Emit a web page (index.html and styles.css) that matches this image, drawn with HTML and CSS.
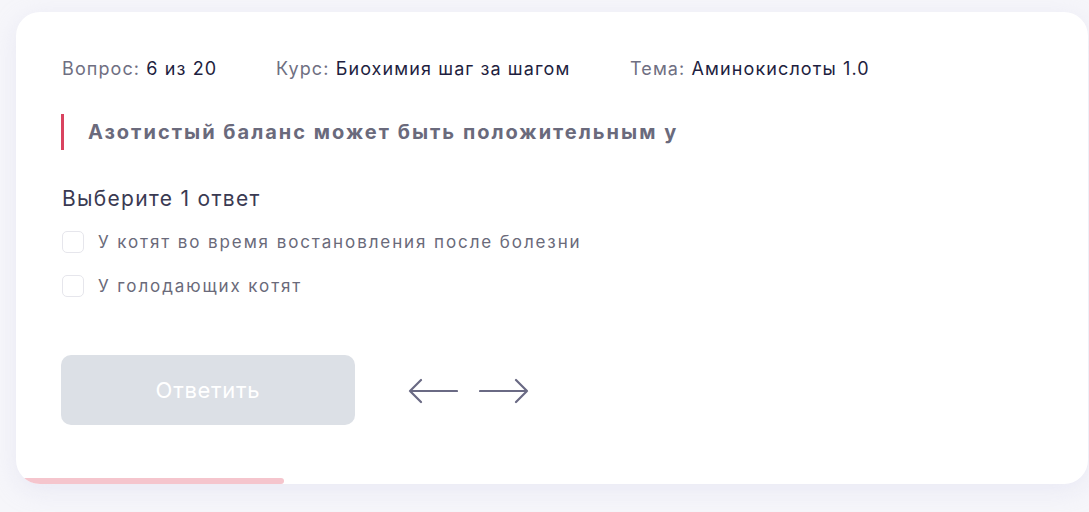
FILE: index.html
```html
<!DOCTYPE html>
<html lang="ru">
<head>
<meta charset="utf-8">
<link rel="stylesheet" href="styles.css">
</head>
<body>
<div class="card">
  <div class="meta">
    <span class="meta-item"><span class="label">Вопрос:</span> 6 из 20</span>
    <span class="meta-item"><span class="label">Курс:</span> Биохимия шаг за шагом</span>
    <span class="meta-item"><span class="label">Тема:</span> Аминокислоты 1.0</span>
  </div>
  <div class="question">Азотистый баланс может быть положительным у</div>
  <div class="hint">Выберите 1 ответ</div>
  <div class="options">
    <label class="option"><span class="box"></span><span>У котят во время востановления после болезни</span></label>
    <label class="option"><span class="box"></span><span>У голодающих котят</span></label>
  </div>
  <div class="actions">
    <button class="submit">Ответить</button>
    <div class="arrows">
      <svg width="50" height="26" viewBox="0 0 50 26"><path d="M49 13H2M13 2L2 13l11 11" fill="none" stroke="#6a6a84" stroke-width="2.2" stroke-linecap="round" stroke-linejoin="round"/></svg>
      <svg width="50" height="26" viewBox="0 0 50 26"><path d="M1 13h47M37 2l11 11-11 11" fill="none" stroke="#6a6a84" stroke-width="2.2" stroke-linecap="round" stroke-linejoin="round"/></svg>
    </div>
  </div>
  <div class="progress"><div class="progress-fill" style="width:25%"></div></div>
</div>
</body>
</html>
```

FILE: styles.css
```css
html, body {
  margin: 0;
  padding: 0;
}
body {
  background: #f6f6fa;
  font-family: Inter, "Noto Sans", sans-serif;
  padding: 12px 1px 28px 16px;
}
.card {
  position: relative;
  background: #fff;
  border-radius: 24px;
  height: 472px;
  box-sizing: border-box;
  padding: 45px 46px 0 46px;
  box-shadow: 0 6px 24px rgba(210, 210, 235, 0.35);
  overflow: hidden;
}
.meta {
  display: flex;
  font-size: 18px;
  line-height: 24px;
  letter-spacing: 1.1px;
  color: #1e1e40;
}
.meta-item:nth-child(1) { width: 214px; }
.meta-item:nth-child(2) { width: 354px; }
.label { color: #6f6f82; }
.question {
  margin-top: 33px;
  border-left: 3px solid #d9435f;
  padding-left: 24px;
  height: 36px;
  display: flex;
  align-items: center;
  font-size: 20px;
  font-weight: 700;
  letter-spacing: 2px;
  color: #6a6a7c;
  margin-left: -1px;
}
.hint {
  margin-top: 35px;
  font-size: 21px;
  line-height: 28px;
  letter-spacing: 1.3px;
  color: #3a3a52;
}
.options {
  margin-top: 17px;
  display: flex;
  flex-direction: column;
  gap: 20px;
}
.option {
  display: flex;
  align-items: center;
  gap: 14px;
  height: 24px;
  font-size: 17px;
  letter-spacing: 1.9px;
  color: #6a6a7a;
}
.box {
  width: 20px;
  height: 20px;
  border: 1px solid #e6e6ec;
  border-radius: 5px;
  flex: none;
}
.actions {
  margin-top: 57px;
  display: flex;
  align-items: center;
  gap: 53px;
}
.submit {
  width: 294px;
  height: 70px;
  border: none;
  border-radius: 10px;
  background: #dce0e6;
  color: #fff;
  font-family: inherit;
  font-size: 22px;
  letter-spacing: 0.7px;
  margin-left: -1px;
}
.arrows {
  display: flex;
  gap: 21px;
  padding-top: 2px;
}
.arrows svg { display: block; }
.progress {
  position: absolute;
  left: 0;
  right: 0;
  bottom: 0;
  height: 6px;
}
.progress-fill {
  height: 100%;
  background: #f5c5cd;
  border-radius: 0 4px 4px 0;
}
```
